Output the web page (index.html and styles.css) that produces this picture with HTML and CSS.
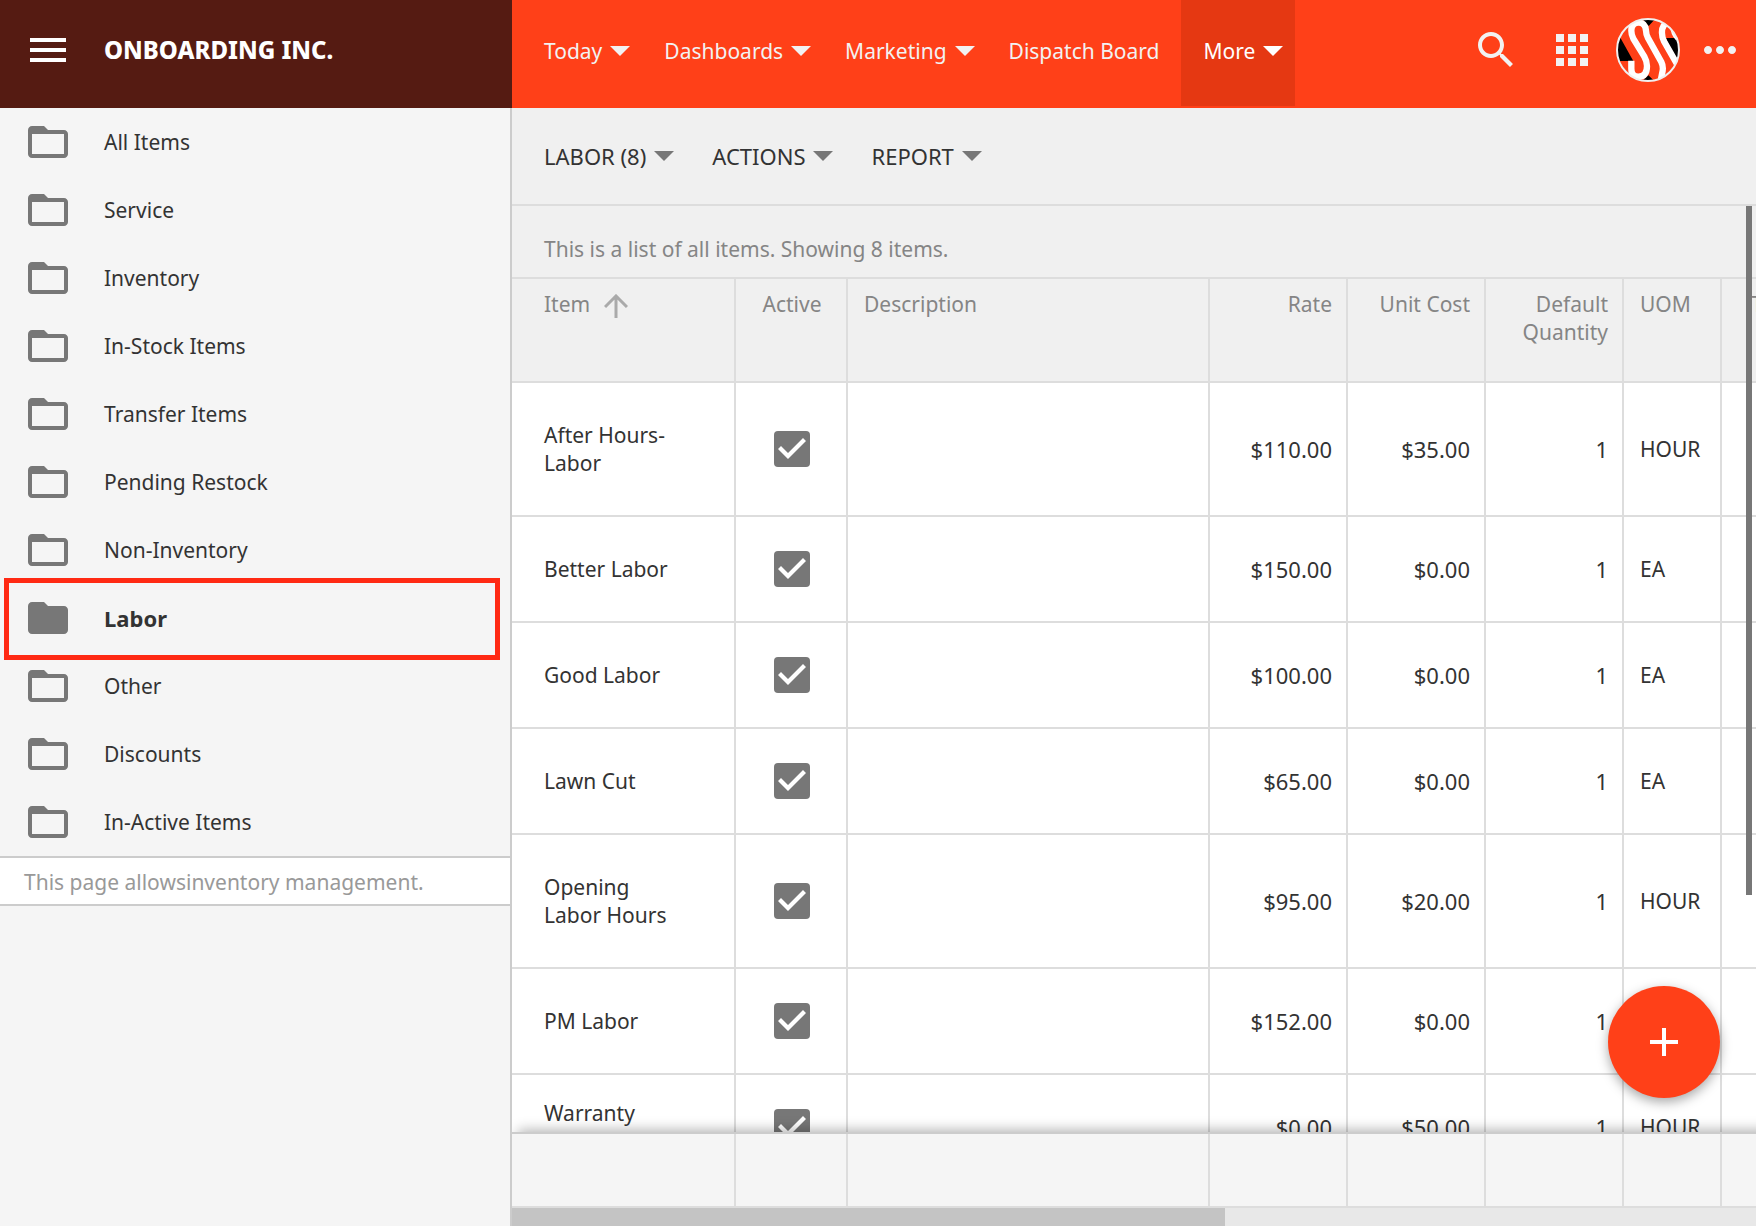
FILE: index.html
```html
<!doctype html>
<html lang="en">

<head>
  <meta charset="utf-8">
  <meta name="viewport" content="width=device-width, initial-scale=1.0">
  <title>Items - Labor</title>
  <link rel="stylesheet" href="styles.css">
</head>

<body>

  <!-- shared icon shapes -->
  <svg class="sprite" aria-hidden="true">
    <symbol id="folder" viewBox="0 0 24 24">
      <path d="M20 6h-8l-2-2H4c-1.1 0-1.99.9-1.99 2L2 18c0 1.1.9 2 2 2h16c1.1 0 2-.9 2-2V8c0-1.1-.9-2-2-2zm0 12H4V8h16v10z"/>
    </symbol>
    <symbol id="folder-full" viewBox="0 0 24 24">
      <path d="M10 4H4c-1.1 0-1.99.9-1.99 2L2 18c0 1.1.9 2 2 2h16c1.1 0 2-.9 2-2V8c0-1.1-.9-2-2-2h-8l-2-2z"/>
    </symbol>
  </svg>

  <!-- left drawer -->
  <aside class="drawer">
    <div class="brand">
      <button class="icon-button" aria-label="Menu">
        <svg class="icon" viewBox="0 0 24 24"><path d="M3 18h18v-2H3v2zm0-5h18v-2H3v2zm0-7v2h18V6H3z"/></svg>
      </button>
      <span class="brand-name">ONBOARDING INC.</span>
    </div>
    <div class="drawer-body">
      <nav class="folders">
        <a href="#"><svg class="icon"><use href="#folder"/></svg>All Items</a>
        <a href="#"><svg class="icon"><use href="#folder"/></svg>Service</a>
        <a href="#"><svg class="icon"><use href="#folder"/></svg>Inventory</a>
        <a href="#"><svg class="icon"><use href="#folder"/></svg>In-Stock Items</a>
        <a href="#"><svg class="icon"><use href="#folder"/></svg>Transfer Items</a>
        <a href="#"><svg class="icon"><use href="#folder"/></svg>Pending Restock</a>
        <a href="#"><svg class="icon"><use href="#folder"/></svg>Non-Inventory</a>
        <a href="#" class="selected"><svg class="icon"><use href="#folder-full"/></svg>Labor</a>
        <a href="#"><svg class="icon"><use href="#folder"/></svg>Other</a>
        <a href="#"><svg class="icon"><use href="#folder"/></svg>Discounts</a>
        <a href="#"><svg class="icon"><use href="#folder"/></svg>In-Active Items</a>
      </nav>
      <p class="drawer-note">This page allowsinventory management.</p>
    </div>
  </aside>

  <!-- main panel -->
  <main class="main">
    <header class="app-header">
      <nav class="tabs">
        <a href="#" class="menu">Today</a>
        <a href="#" class="menu">Dashboards</a>
        <a href="#" class="menu">Marketing</a>
        <a href="#">Dispatch Board</a>
        <a href="#" class="menu active">More</a>
      </nav>
      <div class="header-icons">
        <button class="icon-button" aria-label="Search">
          <svg class="icon" viewBox="0 0 24 24"><path d="M15.5 14h-.79l-.28-.27C15.41 12.59 16 11.11 16 9.5 16 5.91 13.09 3 9.5 3S3 5.91 3 9.5 5.91 16 9.5 16c1.61 0 3.09-.59 4.23-1.57l.27.28v.79l5 4.99L20.49 19l-4.99-5zm-6 0C7.01 14 5 11.99 5 9.5S7.01 5 9.5 5 14 7.01 14 9.5 11.99 14 9.5 14z"/></svg>
        </button>
        <button class="icon-button" aria-label="Apps">
          <svg class="icon" viewBox="0 0 24 24"><path d="M4 8h4V4H4v4zm6 12h4v-4h-4v4zm-6 0h4v-4H4v4zm0-6h4v-4H4v4zm6 0h4v-4h-4v4zm6-10v4h4V4h-4zm-6 4h4V4h-4v4zm6 6h4v-4h-4v4zm0 6h4v-4h-4v4z"/></svg>
        </button>
        <button class="icon-button avatar" aria-label="Account">
          <svg viewBox="0 0 192 192">
            <clipPath id="round"><circle cx="96" cy="96" r="93"/></clipPath>
            <g clip-path="url(#round)">
              <path fill="#ff4018" d="M0 0h192v192H0z"/>
              <path d="M76 0h44l-22 24zM8 50l44 79H0zM150 60h42v80l-16-14zM76 192l21-20 21 20z"/>
              <g fill="none" stroke="#fff" stroke-width="19">
                <path d="M46 128v24q0 24 21 24 26 0 26-32 0-14-8-28L52 62q-6-12-6-24 0-24 22-24 20 0 22 24 0 10 6 22l40 72q6 12 4 26l-6 30"/>
                <path d="M160 10q-24 10-22 36 0 12 6 24l40 70"/>
                <path stroke-width="10" d="M184 64q-16-16-17-44"/>
              </g>
            </g>
            <circle cx="96" cy="96" r="93" fill="none" stroke="#f0f0f0" stroke-width="6"/>
          </svg>
        </button>
        <button class="icon-button" aria-label="More options">
          <svg class="icon" viewBox="0 0 24 24"><path d="M6 10c-1.1 0-2 .9-2 2s.9 2 2 2 2-.9 2-2-.9-2-2-2zm12 0c-1.1 0-2 .9-2 2s.9 2 2 2 2-.9 2-2-.9-2-2-2zm-6 0c-1.1 0-2 .9-2 2s.9 2 2 2 2-.9 2-2-.9-2-2-2z"/></svg>
        </button>
      </div>
    </header>

    <div class="toolbar">
      <button class="menu">LABOR (8)</button>
      <button class="menu">ACTIONS</button>
      <button class="menu">REPORT</button>
    </div>

    <section class="list">
      <p class="list-info">This is a list of all items. Showing 8 items.</p>
      <table class="grid">
        <colgroup>
          <col class="col-item"><col class="col-active"><col><col class="col-num"><col class="col-num"><col class="col-num"><col class="col-uom"><col class="col-tax">
        </colgroup>
        <thead>
          <tr>
            <th>Item <svg class="sort" viewBox="0 0 24 24"><path d="M1 13L12 2l11 11M12 2v22"/></svg></th>
            <th class="center">Active</th>
            <th>Description</th>
            <th class="num">Rate</th>
            <th class="num">Unit Cost</th>
            <th class="num">Default Quantity</th>
            <th>UOM</th>
            <th class="center">Taxable</th>
          </tr>
        </thead>
        <tbody>
          <tr class="tall">
            <td>After Hours-Labor</td>
            <td class="center"><input type="checkbox" checked aria-label="After Hours-Labor active"></td>
            <td></td>
            <td class="num">$110.00</td>
            <td class="num">$35.00</td>
            <td class="num">1</td>
            <td>HOUR</td>
            <td></td>
          </tr>
          <tr>
            <td>Better Labor</td>
            <td class="center"><input type="checkbox" checked aria-label="Better Labor active"></td>
            <td></td>
            <td class="num">$150.00</td>
            <td class="num">$0.00</td>
            <td class="num">1</td>
            <td>EA</td>
            <td></td>
          </tr>
          <tr>
            <td>Good Labor</td>
            <td class="center"><input type="checkbox" checked aria-label="Good Labor active"></td>
            <td></td>
            <td class="num">$100.00</td>
            <td class="num">$0.00</td>
            <td class="num">1</td>
            <td>EA</td>
            <td></td>
          </tr>
          <tr>
            <td>Lawn Cut</td>
            <td class="center"><input type="checkbox" checked aria-label="Lawn Cut active"></td>
            <td></td>
            <td class="num">$65.00</td>
            <td class="num">$0.00</td>
            <td class="num">1</td>
            <td>EA</td>
            <td></td>
          </tr>
          <tr class="tall">
            <td>Opening Labor Hours</td>
            <td class="center"><input type="checkbox" checked aria-label="Opening Labor Hours active"></td>
            <td></td>
            <td class="num">$95.00</td>
            <td class="num">$20.00</td>
            <td class="num">1</td>
            <td>HOUR</td>
            <td></td>
          </tr>
          <tr>
            <td>PM Labor</td>
            <td class="center"><input type="checkbox" checked aria-label="PM Labor active"></td>
            <td></td>
            <td class="num">$152.00</td>
            <td class="num">$0.00</td>
            <td class="num">1</td>
            <td></td>
            <td></td>
          </tr>
          <tr>
            <td>Warranty<br>Labor</td>
            <td class="center"><input type="checkbox" checked aria-label="Warranty Labor active"></td>
            <td></td>
            <td class="num">$0.00</td>
            <td class="num">$50.00</td>
            <td class="num">1</td>
            <td>HOUR</td>
            <td></td>
          </tr>
        </tbody>
      </table>
      <div class="scroll-y"></div>
    </section>

    <!-- totals row, stays below the list -->
    <table class="grid totals">
      <colgroup>
        <col class="col-item"><col class="col-active"><col><col class="col-num"><col class="col-num"><col class="col-num"><col class="col-uom"><col class="col-tax">
      </colgroup>
      <tbody>
        <tr><td></td><td></td><td></td><td></td><td></td><td></td><td></td><td></td></tr>
      </tbody>
    </table>
    <div class="scroll-x"><div class="thumb"></div></div>

    <button class="fab" aria-label="Add item">
      <svg viewBox="0 0 28 28"><path d="M0 14h28M14 0v28"/></svg>
    </button>
  </main>

</body>

</html>
```

FILE: styles.css
```css
* {
  box-sizing: border-box;
}

body {
  margin: 0;
  height: 100vh;
  display: flex;
  overflow: hidden;
  font-family: 'Noto Sans', 'Open Sans', sans-serif;
  font-size: 21px;
  line-height: 28px;
  color: #333;
  background-color: #f5f5f5;
}

a {
  color: inherit;
  text-decoration: none;
}

p {
  margin: 0;
}

button {
  border: 0;
  padding: 0;
  background: none;
  font: inherit;
  color: inherit;
  cursor: pointer;
}

.sprite {
  position: absolute;
  width: 0;
  height: 0;
}

.icon {
  display: block;
  flex: none;
  width: 48px;
  height: 48px;
  fill: currentColor;
}

.icon-button {
  display: block;
  flex: none;
}

/* drawer */
.drawer {
  flex: none;
  width: 512px;
  display: flex;
  flex-direction: column;
}

.brand {
  height: 108px;
  padding: 0 24px 8px;
  display: flex;
  align-items: center;
  gap: 32px;
  background-color: #551b12;
  color: #fff;
}

.brand-name {
  font-size: 24px;
  font-weight: 800;
}

.drawer-body {
  flex: 1;
  border-right: 2px solid #ccc;
}

.folders a {
  position: relative;
  height: 68px;
  padding-left: 24px;
  display: flex;
  align-items: center;
  gap: 32px;
}

.folders .icon {
  color: #777;
}

.folders .selected {
  font-size: 22px;
  font-weight: bold;
}

/* highlight frame, runs over the neighbouring rows */
.folders .selected::after {
  content: '';
  position: absolute;
  top: -6px;
  right: 10px;
  bottom: -8px;
  left: 4px;
  border: 5px solid #ff2a14;
}

.drawer-note {
  padding: 10px 24px 8px;
  border-top: 2px solid #ccc;
  border-bottom: 2px solid #ccc;
  background-color: #fff;
  color: #999;
}

/* main */
.main {
  position: relative;
  flex: 1;
  min-width: 0;
  display: flex;
  flex-direction: column;
  overflow: hidden;
}

.app-header {
  flex: none;
  height: 108px;
  display: flex;
  justify-content: space-between;
  background-color: #ff4018;
  color: #f2f2f2;
}

.tabs {
  display: flex;
  height: 106px;
  padding-left: 20px;
}

.tabs a {
  display: flex;
  align-items: center;
  padding: 0 12px 5px;
  margin-right: 10px;
}

.tabs .active {
  padding-left: 22px;
  background-color: #e53812;
  color: #fff;
}

.menu::after {
  content: '';
  display: inline-block;
  margin-left: 8px;
  border: 10px solid transparent;
  border-top-color: currentColor;
  border-bottom: 0;
}

.header-icons {
  display: flex;
  align-items: center;
  padding: 0 12px 8px 0;
}

.header-icons .icon-button {
  margin-left: 28px;
}

.header-icons .avatar {
  width: 64px;
  height: 64px;
  margin: 0 -12px 0 20px;
}

.avatar svg {
  display: block;
}

.toolbar {
  flex: none;
  height: 98px;
  display: flex;
  align-items: center;
  gap: 38px;
  padding-left: 32px;
  border-bottom: 2px solid #ddd;
  background-color: #f0f0f0;
  font-size: 22px;
}

.toolbar .menu {
  display: flex;
  align-items: center;
}

.toolbar .menu::after {
  border-top-color: #777;
}

.list {
  position: relative;
  flex: 1;
  min-height: 0;
  overflow: hidden;
  background-color: #fff;
}

.list-info {
  padding: 29px 32px 14px;
  border-bottom: 2px solid #ddd;
  background-color: #f0f0f0;
  color: #858585;
}

/* wider than the panel, the last column runs off to the right */
.grid {
  width: calc(100% + 100px);
  table-layout: fixed;
  border-collapse: separate;
  border-spacing: 0;
}

.col-item {
  width: 224px;
}

.col-active {
  width: 112px;
}

.col-num {
  width: 138px;
}

.col-uom {
  width: 98px;
}

.col-tax {
  width: 134px;
}

.grid th,
.grid td {
  padding: 0 14px 0 16px;
  border-right: 2px solid #ddd;
  border-bottom: 2px solid #ddd;
  text-align: left;
}

.grid th:first-child,
.grid td:first-child {
  padding-left: 32px;
  padding-right: 48px;
}

.grid th {
  height: 104px;
  padding-top: 11px;
  vertical-align: top;
  font-weight: normal;
  background-color: #f0f0f0;
  color: #858585;
}

.grid td {
  height: 106px;
}

.grid .tall td {
  height: 134px;
}

.grid .num {
  text-align: right;
}

.grid td.num {
  font-size: 22px;
}

.grid .center {
  padding-left: 2px;
  padding-right: 0;
  text-align: center;
}

.sort {
  width: 24px;
  height: 24px;
  margin-left: 8px;
  vertical-align: -6px;
  fill: none;
  stroke: #aaa;
  stroke-width: 3;
}

input[type="checkbox"] {
  appearance: none;
  display: block;
  width: 36px;
  height: 36px;
  margin: 0 auto;
  border-radius: 4px;
  background-color: #777;
}

input[type="checkbox"]:checked::before {
  content: '';
  display: block;
  width: 36px;
  height: 36px;
  background-color: #fff;
  clip-path: polygon(14px 28px, 4px 18px, 7px 15px, 14px 22px, 29px 7px, 32px 10px);
}

.totals {
  position: relative;
  flex: none;
  border-top: 2px solid #ccc;
  background-color: #f5f5f5;
  box-shadow: 0 -8px 12px -6px rgba(0, 0, 0, 0.3);
}

.totals td {
  height: 74px;
}

.scroll-y {
  position: absolute;
  top: 0;
  right: 4px;
  width: 6px;
  height: 74.4%;
  background-color: #777;
}

.scroll-x {
  flex: none;
  height: 18px;
  background-color: #e8e8e8;
}

.scroll-x .thumb {
  width: 57.3%;
  height: 100%;
  background-color: #c4c4c4;
}

.fab {
  position: absolute;
  right: 36px;
  bottom: 128px;
  width: 112px;
  height: 112px;
  border-radius: 50%;
  background-color: #ff4018;
  box-shadow: 0 4px 12px rgba(0, 0, 0, 0.35);
}

.fab svg {
  display: block;
  width: 28px;
  height: 28px;
  margin: 0 auto;
  fill: none;
  stroke: #fff;
  stroke-width: 4;
}
```
